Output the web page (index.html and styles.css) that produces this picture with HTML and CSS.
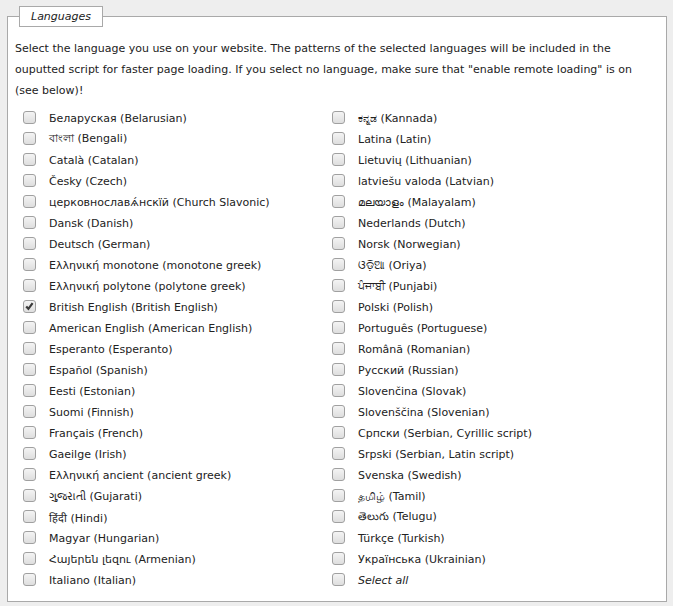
FILE: index.html
```html
<!DOCTYPE html>
<html>
<head>
<meta charset="utf-8">
<link rel="stylesheet" href="styles.css">
</head>
<body>
<fieldset class="box">
  <legend class="box-title">Languages</legend>
  <p class="intro">Select the language you use on your website. The patterns of the selected languages will be included in the ouputted script for faster page loading. If you select no language, make sure that "enable remote loading" is on (see below)!</p>
  <ul class="langs">
    <li><span class="cb"></span><span>Беларуская (Belarusian)</span></li>
    <li><span class="cb"></span><span>বাংলা (Bengali)</span></li>
    <li><span class="cb"></span><span>Català (Catalan)</span></li>
    <li><span class="cb"></span><span>Česky (Czech)</span></li>
    <li><span class="cb"></span><span>церковнославѧ́нскїй (Church Slavonic)</span></li>
    <li><span class="cb"></span><span>Dansk (Danish)</span></li>
    <li><span class="cb"></span><span>Deutsch (German)</span></li>
    <li><span class="cb"></span><span>Ελληνική monotone (monotone greek)</span></li>
    <li><span class="cb"></span><span>Ελληνική polytone (polytone greek)</span></li>
    <li><span class="cb checked"><svg viewBox="0 0 13 13" width="13" height="13"><path d="M3.2 6.4 L5.4 8.8 L9.6 3.2" fill="none" stroke="#3a3a3a" stroke-width="2.2"/></svg></span><span>British English (British English)</span></li>
    <li><span class="cb"></span><span>American English (American English)</span></li>
    <li><span class="cb"></span><span>Esperanto (Esperanto)</span></li>
    <li><span class="cb"></span><span>Español (Spanish)</span></li>
    <li><span class="cb"></span><span>Eesti (Estonian)</span></li>
    <li><span class="cb"></span><span>Suomi (Finnish)</span></li>
    <li><span class="cb"></span><span>Français (French)</span></li>
    <li><span class="cb"></span><span>Gaeilge (Irish)</span></li>
    <li><span class="cb"></span><span>Ελληνική ancient (ancient greek)</span></li>
    <li><span class="cb"></span><span>ગુજરાતી (Gujarati)</span></li>
    <li><span class="cb"></span><span>हिंदी (Hindi)</span></li>
    <li><span class="cb"></span><span>Magyar (Hungarian)</span></li>
    <li><span class="cb"></span><span>Հայերեն լեզու (Armenian)</span></li>
    <li><span class="cb"></span><span>Italiano (Italian)</span></li>
    <li><span class="cb"></span><span>ಕನ್ನಡ (Kannada)</span></li>
    <li><span class="cb"></span><span>Latina (Latin)</span></li>
    <li><span class="cb"></span><span>Lietuvių (Lithuanian)</span></li>
    <li><span class="cb"></span><span>latviešu valoda (Latvian)</span></li>
    <li><span class="cb"></span><span>മലയാളം (Malayalam)</span></li>
    <li><span class="cb"></span><span>Nederlands (Dutch)</span></li>
    <li><span class="cb"></span><span>Norsk (Norwegian)</span></li>
    <li><span class="cb"></span><span>ଓଡ଼ିଆ (Oriya)</span></li>
    <li><span class="cb"></span><span>ਪੰਜਾਬੀ (Punjabi)</span></li>
    <li><span class="cb"></span><span>Polski (Polish)</span></li>
    <li><span class="cb"></span><span>Português (Portuguese)</span></li>
    <li><span class="cb"></span><span>Română (Romanian)</span></li>
    <li><span class="cb"></span><span>Русский (Russian)</span></li>
    <li><span class="cb"></span><span>Slovenčina (Slovak)</span></li>
    <li><span class="cb"></span><span>Slovenščina (Slovenian)</span></li>
    <li><span class="cb"></span><span>Српски (Serbian, Cyrillic script)</span></li>
    <li><span class="cb"></span><span>Srpski (Serbian, Latin script)</span></li>
    <li><span class="cb"></span><span>Svenska (Swedish)</span></li>
    <li><span class="cb"></span><span>தமிழ் (Tamil)</span></li>
    <li><span class="cb"></span><span>తెలుగు (Telugu)</span></li>
    <li><span class="cb"></span><span>Türkçe (Turkish)</span></li>
    <li><span class="cb"></span><span>Українська (Ukrainian)</span></li>
    <li><span class="cb"></span><span class="all">Select all</span></li>
  </ul>
</fieldset>
</body>
</html>
```
FILE: styles.css
```css
html, body {
  margin: 0;
  background: #eeeeee;
}
body {
  padding: 6px 6px 0 7px;
  font-family: "DejaVu Sans", Verdana, sans-serif;
  font-size: 11px;
  color: #222222;
}
.box {
  margin: 0;
  padding: 0 7px 10px 7px;
  border: 1px solid #a9a9a9;
  background: #ffffff;
}
.box-title {
  margin-left: 4px;
  padding: 0 11px;
  border: 1px solid #a9a9a9;
  background: #ffffff;
  font-style: italic;
  line-height: 19px;
}
.intro {
  margin: 11px 12px 7px 0;
  line-height: 21px;
}
.langs {
  list-style: none;
  margin: 0;
  padding: 0 0 0 8px;
  display: grid;
  grid-auto-flow: column;
  grid-template-rows: repeat(23, 21px);
  grid-template-columns: 309px 309px;
}
.langs li {
  display: flex;
  align-items: center;
  gap: 13px;
  white-space: nowrap;
}
.cb {
  box-sizing: border-box;
  width: 13px;
  height: 13px;
  border: 1px solid #a0a0a0;
  border-radius: 3px;
  background: linear-gradient(#f4f4f4, #dedede);
  flex: none;
  position: relative;
  top: -1px;
  display: flex;
}
.cb svg {
  margin: -1px;
}
.all {
  font-style: italic;
}
```
